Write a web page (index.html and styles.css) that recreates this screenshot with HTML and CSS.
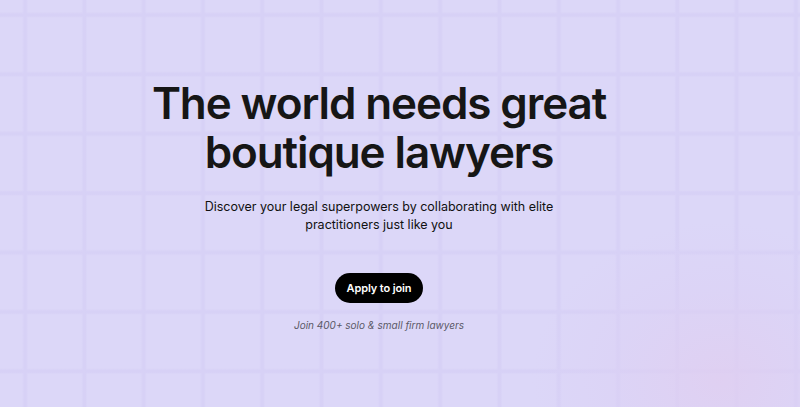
FILE: index.html
```html
<!DOCTYPE html>
<html lang="en">
<head>
<meta charset="utf-8">
<title>Boutique lawyers</title>
<link rel="stylesheet" href="styles.css">
</head>
<body>
<main class="hero">
  <div class="glow"></div>
  <section class="content">
    <h1 class="title">The world needs great<br>boutique lawyers</h1>
    <p class="lead">Discover your legal superpowers by collaborating with elite<br>practitioners just like you</p>
    <a class="cta" href="#">Apply to join</a>
    <p class="note">Join 400+ solo &amp; small firm lawyers</p>
  </section>
</main>
</body>
</html>
```
FILE: styles.css
```css
* { box-sizing: border-box; }
html, body { margin: 0; padding: 0; }
body {
  width: 800px;
  height: 407px;
  overflow: hidden;
  font-family: Inter, "Noto Sans", sans-serif;
  background: #dcd7f8;
}
.hero {
  position: relative;
  width: 800px;
  height: 407px;
  background-color: #dcd7f8;
  background-image:
    linear-gradient(to right, transparent 22px, #d7d1f6 24px, #d7d1f6 26px, transparent 28px),
    linear-gradient(to bottom, transparent 12px, #d7d1f6 14px, #d7d1f6 16px, transparent 18px);
  background-size: 59.3px 100%, 100% 59.4px;
  overflow: hidden;
}
.glow {
  position: absolute;
  left: 530px;
  top: 220px;
  width: 380px;
  height: 320px;
  border-radius: 50%;
  background: radial-gradient(ellipse at center, rgba(224, 206, 240, 0.8) 0%, rgba(220, 208, 244, 0.45) 40%, rgba(220, 215, 248, 0) 70%);
  pointer-events: none;
}
.content {
  position: relative;
  width: 758px;
  display: flex;
  flex-direction: column;
  align-items: center;
  text-align: center;
  padding-top: 79px;
}
.title {
  margin: 0;
  font-size: 44px;
  line-height: 49px;
  font-weight: 600;
  letter-spacing: -0.025em;
  color: #161616;
}
.lead {
  margin: 21px 0 0;
  font-size: 12.5px;
  line-height: 18px;
  color: #111;
}
.cta {
  margin-top: 39px;
  display: inline-flex;
  align-items: center;
  justify-content: center;
  height: 30px;
  padding: 0 12px;
  border-radius: 15px;
  background: #000;
  color: #fff;
  font-size: 11px;
  font-weight: 600;
  letter-spacing: -0.01em;
  text-decoration: none;
}
.note {
  margin: 16px 0 0;
  font-size: 10px;
  line-height: 13px;
  font-style: italic;
  color: #5a5866;
}
```
